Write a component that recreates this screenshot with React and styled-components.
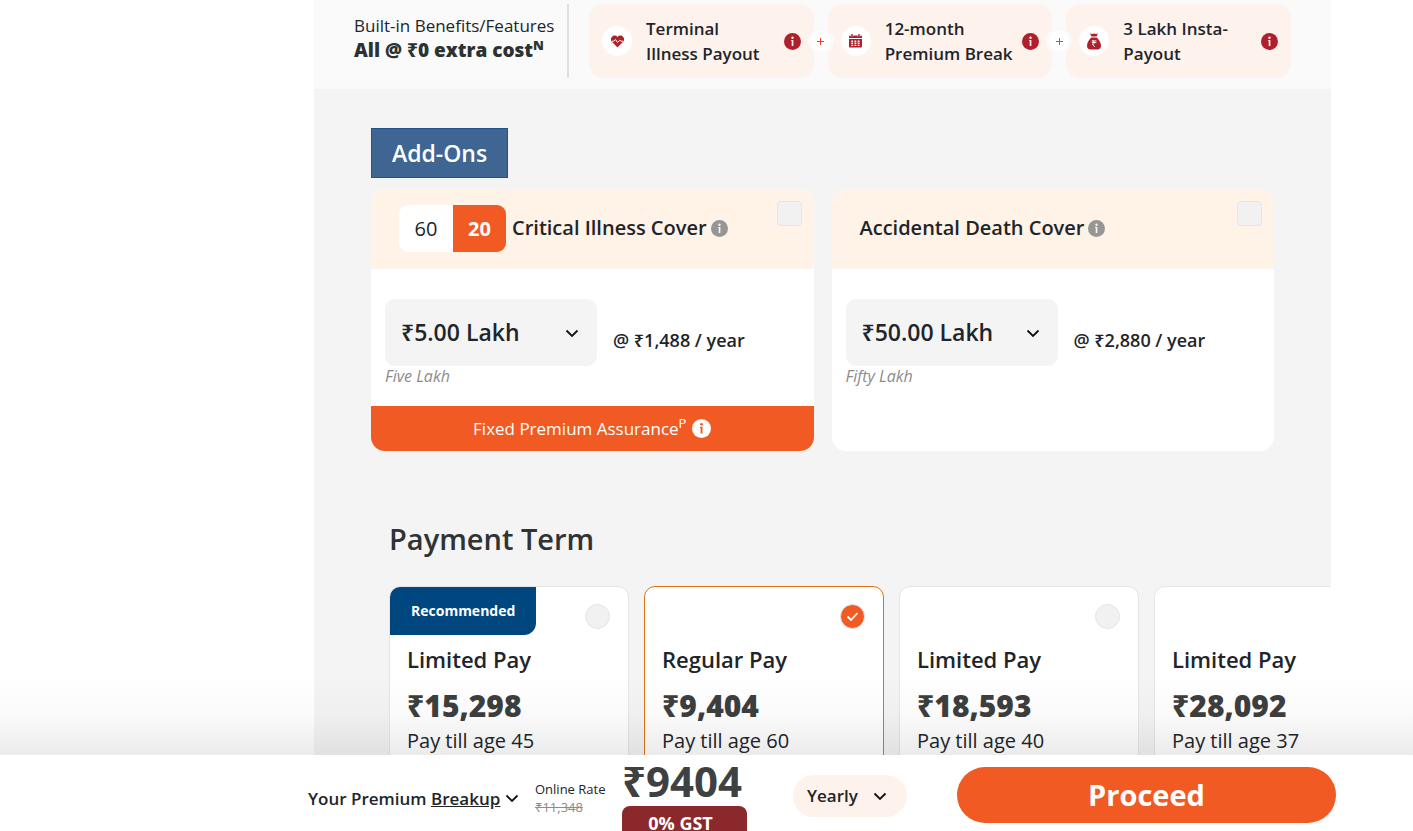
import React, { useState } from 'react';
import styled, { createGlobalStyle } from 'styled-components';

const GlobalStyle = createGlobalStyle`
  * {
    box-sizing: border-box;
  }

  body {
    margin: 0;
    background: #fff;
    color: #212529;
    font-family: 'Open Sans', 'Noto Sans', sans-serif;
    font-size: 17px;
  }

  button, select, input {
    font-family: inherit;
    color: inherit;
  }

  h2, h3, p {
    margin: 0;
  }
`;

const Page = styled.div`
  display: flex;
  flex-direction: column;
  height: 100vh;
`;

const Scroller = styled.div`
  flex: 1;
  min-height: 0;
  overflow-y: auto;
  scrollbar-width: none;
  padding: 0 82px 0 314px;
`;

const Content = styled.main`
  background: #f4f4f4;
  overflow: hidden;
`;

// Built-in benefits strip
const Benefits = styled.section`
  display: flex;
  background: #fafafa;
  padding: 4px 40px 11px;
`;

const BenefitsTitle = styled.div`
  width: 215px;
  flex-shrink: 0;
  padding-top: 10px;
  border-right: 2px solid #dfdfdf;
  line-height: 24px;
  white-space: nowrap;

  strong {
    display: block;
    font-size: 19px;
    font-weight: 800;
    color: #2b3230;
  }
`;

const Sup = styled.sup`
  font-size: 13px;
  line-height: 0;
`;

const BenefitList = styled.ul`
  display: flex;
  flex: 1;
  gap: 14px;
  list-style: none;
  margin: 0 0 0 20px;
  padding: 0;
`;

const Benefit = styled.li`
  position: relative;
  display: flex;
  flex: 1;
  align-items: center;
  height: 74px;
  padding: 0 13px;
  border-radius: 14px;
  background: #fef2ec;
`;

const BenefitIcon = styled.span`
  display: flex;
  align-items: center;
  justify-content: center;
  width: 30px;
  height: 30px;
  margin-right: 14px;
  border-radius: 50%;
  background: #fff;
`;

const BenefitName = styled.span`
  flex: 1;
  font-weight: 600;
  line-height: 25px;
  white-space: pre;
`;

const Plus = styled.span`
  position: absolute;
  z-index: 1;
  right: -20px;
  display: flex;
  align-items: center;
  justify-content: center;
  width: 26px;
  height: 26px;
  border: 3px solid #fafafa;
  border-radius: 50%;
  background: #fff;
`;

const InfoButton = styled.button`
  display: inline-flex;
  flex-shrink: 0;
  padding: 0;
  border: 0;
  background: none;
  color: ${(props) => props.$color};
  cursor: pointer;
`;

// Add-ons
const AddOns = styled.section`
  padding: 39px 57px 0;
`;

const AddOnsBadge = styled.h2`
  width: fit-content;
  padding: 0 20px;
  border: 1px solid #1d548b;
  background: #3f6592;
  color: #fff;
  font-size: 23px;
  font-weight: 600;
  line-height: 48px;
`;

const AddOnGrid = styled.div`
  display: grid;
  grid-template-columns: 1fr 1fr;
  gap: 18px;
  margin-top: 11px;
`;

const AddOnCard = styled.article`
  display: flex;
  flex-direction: column;
  border-radius: 14px;
  background: #fff;
  overflow: hidden;
`;

const AddOnHeader = styled.header`
  display: flex;
  align-items: center;
  height: 80px;
  padding: 0 12px 2px 28px;
  background: #fff2e6;
`;

const AddOnTitle = styled.h3`
  margin-right: 4px;
  font-size: 20px;
  font-weight: 600;
  line-height: 28px;
  white-space: nowrap;
`;

const AgeToggle = styled.div`
  display: flex;
  margin-right: 6px;
  border-radius: 9px;
  overflow: hidden;
`;

const AgeButton = styled.button`
  width: ${(props) => (props.$active ? 53 : 54)}px;
  height: 47px;
  padding: 0;
  border: 0;
  background: ${(props) => (props.$active ? '#f15a22' : '#fff')};
  color: ${(props) => (props.$active ? '#fff' : '#212529')};
  font-size: 20px;
  font-weight: ${(props) => (props.$active ? 700 : 400)};
  cursor: pointer;
`;

const CheckBox = styled.input`
  appearance: none;
  align-self: flex-start;
  width: 25px;
  height: 25px;
  margin: 12px 0 0 auto;
  border: 1px solid #e4e5ea;
  border-radius: 4px;
  background: #f1f1f2;

  &:checked {
    background: #f15a22;
  }
`;

const AddOnBody = styled.div`
  display: flex;
  gap: 16px;
  padding: 30px 14px 20px;
`;

const SelectBox = styled.div`
  position: relative;
  display: flex;
  align-items: center;
  width: ${(props) => props.$width}px;

  svg {
    position: absolute;
    right: ${(props) => props.$inset}px;
    pointer-events: none;
  }
`;

const AmountSelect = styled.select`
  appearance: none;
  width: 100%;
  height: 67px;
  padding: 0 16px 2px;
  border: 0;
  border-radius: 10px;
  background: #f4f4f4;
  font-size: 23px;
  font-weight: 600;
`;

const AmountWords = styled.p`
  color: #8c8c8c;
  font-size: 16px;
  font-style: italic;
  line-height: 20px;
`;

const AddOnPrice = styled.p`
  padding-top: 29px;
  font-size: 18px;
  font-weight: 600;
  line-height: 24px;
`;

const Assurance = styled.footer`
  display: flex;
  align-items: center;
  justify-content: center;
  gap: 6px;
  height: 45px;
  background: #f15a22;
  color: #fff;
`;

// Payment term
const PaymentTerm = styled.section`
  padding: 68px 0 40px 75px;
`;

const PaymentTitle = styled.h2`
  color: #2f3333;
  font-size: 29px;
  font-weight: 600;
  line-height: 40px;
`;

const PlanRow = styled.div`
  display: flex;
  gap: 15px;
  margin-top: 27px;
`;

const Plan = styled.label`
  position: relative;
  display: flex;
  flex-direction: column;
  flex: 0 0 240px;
  padding: 57px 17px 30px;
  border: 1px solid ${(props) => (props.$active ? '#e07318' : '#e4e5ea')};
  border-radius: 11px;
  background: #fff;
`;

const Recommended = styled.span`
  position: absolute;
  top: 0;
  left: 0;
  padding: 0 21px;
  border-radius: 10px 0 12px 0;
  background: #00467f;
  color: #fff;
  font-size: 14px;
  font-weight: 700;
  line-height: 48px;
`;

const PlanRadio = styled.input`
  appearance: none;
  position: absolute;
  top: 17px;
  right: 18px;
  width: 25px;
  height: 25px;
  margin: 0;
  border: 1px solid #e4e5ea;
  border-radius: 50%;
  background: #f1f1f2;

  &:checked {
    background: #f15a22;
  }
`;

const PlanTick = styled.svg`
  position: absolute;
  top: 23px;
  right: 24px;
  pointer-events: none;
`;

const PlanName = styled.span`
  font-size: 22px;
  font-weight: 600;
  line-height: 30px;
`;

const PlanPrice = styled.span`
  margin-top: 12px;
  color: #3d3f3f;
  font-size: 30px;
  font-weight: 800;
  line-height: 40px;
`;

const PlanTill = styled.span`
  margin-top: 2px;
  font-size: 20px;
  line-height: 26px;
`;

// Sticky premium bar
const BottomBar = styled.footer`
  position: relative;
  flex-shrink: 0;
  display: grid;
  grid-template-columns: 227px 87px 171px 164px 1fr;
  height: 76px;
  padding: 0 77px 0 308px;
  background: #fff;

  &::before {
    content: '';
    position: absolute;
    right: 0;
    bottom: 100%;
    left: 0;
    height: 80px;
    background: linear-gradient(rgba(0, 0, 0, 0), rgba(0, 0, 0, 0.02) 50%, rgba(0, 0, 0, 0.08));
    pointer-events: none;
  }
`;

const Premium = styled.div`
  display: flex;
  align-items: center;
  gap: 5px;
  height: 24px;
  margin-top: 31px;
  font-weight: 600;
  white-space: nowrap;

  a {
    color: inherit;
  }
`;

const OnlineRate = styled.div`
  padding-top: 25px;
  font-size: 13px;
  line-height: 18px;
  white-space: nowrap;

  s {
    display: block;
    color: #8c8c8c;
  }
`;

const Total = styled.div`
  width: 125px;
`;

const TotalPrice = styled.div`
  color: #3f4041;
  font-size: 42px;
  font-weight: 700;
  line-height: 51px;
`;

const Gst = styled.div`
  height: 25px;
  padding-right: 8px;
  border-radius: 8px 8px 0 0;
  background: #8a282b;
  color: #fff;
  font-size: 18px;
  font-weight: 700;
  line-height: 34px;
  text-align: center;
  overflow: hidden;
`;

const FrequencySelect = styled.select`
  appearance: none;
  width: 100%;
  height: 42px;
  padding: 0 14px 2px;
  border: 0;
  border-radius: 21px;
  background: #fef2ec;
  font-size: 17px;
  font-weight: 600;
`;

const FrequencyCell = styled.div`
  padding-top: 20px;
`;

const Proceed = styled.button`
  height: 56px;
  margin-top: 12px;
  padding-bottom: 3px;
  border: 0;
  border-radius: 28px;
  background: #f15a22;
  color: #fff;
  font-size: 29px;
  font-weight: 700;
  cursor: pointer;
`;

const Chevron = () => (
  <svg width="14" height="14" viewBox="0 0 14 14" fill="none" stroke="#111" strokeWidth="1.8">
    <path d="M1.5 4.5 7 10l5.5-5.5" />
  </svg>
);

const InfoIcon = ({ size = 17, mark = '#fff' }) => (
  <svg width={size} height={size} viewBox="0 0 17 17">
    <circle cx="8.5" cy="8.5" r="8.5" fill="currentColor" />
    <circle cx="8.5" cy="4.8" r="1.2" fill={mark} />
    <path fill={mark} d="M7.1 7h2.3v6H7.700V8h-.6z" />
  </svg>
);

const HeartIcon = () => (
  <svg width="13" height="13" viewBox="0 0 13 13">
    <path
      fill="#b0202b"
      d="M6.5 12.6 1.1 7.1A3.6 3.6 0 0 1 .9 2 3.4 3.4 0 0 1 6.5 2a3.4 3.4 0 0 1 5.6 0 3.6 3.6 0 0 1-.2 5.1z"
    />
    <path fill="none" stroke="#fff" d="M.5 6.2h2.3l1.6-1.7 2.2 3 2.2-2.3 1.2 1h2.5" />
  </svg>
);

const CalendarIcon = () => (
  <svg width="13" height="14" viewBox="0 0 13 14">
    <path fill="#b0202b" d="M1 1.5h11a1 1 0 0 1 1 1V4H0V2.5a1 1 0 0 1 1-1zM0 5h13v7.5a1 1 0 0 1-1 1H1a1 1 0 0 1-1-1z" />
    <path stroke="#fff" strokeWidth="2.6" d="M3 0v2.6M10 0v2.6" />
    <path stroke="#b0202b" strokeWidth="1.4" d="M3 0v3M10 0v3" />
    <path
      stroke="#fff"
      strokeWidth="1.4"
      strokeDasharray="1.8 1.4"
      d="M2.3 7.2h8.4M2.3 9.3h8.4M2.3 11.4h8.4"
    />
  </svg>
);

const MoneyBagIcon = () => (
  <svg width="14" height="17" viewBox="0 0 14 17">
    <path
      fill="#b0202b"
      d="M3 .5l2 .6L7 .5l2 .6 2-.6-1.4 3H4.4zM4.4 4.5h5.2c2 1.8 4.4 5 4.4 8.3 0 2.6-1.5 3.7-3.5 3.7h-7C1.5 16.5 0 15.4 0 12.8 0 9.5 2.4 6.3 4.4 4.5z"
    />
    <path
      fill="none"
      stroke="#fff"
      strokeWidth="0.9"
      d="M4.8 7.9h4.6M4.8 9.5h4.6M5.2 7.9c3.2 0 3.2 3.3 0 3.3l2.7 2.7"
    />
  </svg>
);

const benefits = [
  { name: 'Terminal\nIllness Payout', Icon: HeartIcon },
  { name: '12-month\nPremium Break', Icon: CalendarIcon },
  { name: '3 Lakh Insta-\nPayout', Icon: MoneyBagIcon },
];

const plans = [
  { name: 'Limited Pay', price: '₹15,298', till: 'Pay till age 45', recommended: true },
  { name: 'Regular Pay', price: '₹9,404', till: 'Pay till age 60' },
  { name: 'Limited Pay', price: '₹18,593', till: 'Pay till age 40' },
  { name: 'Limited Pay', price: '₹28,092', till: 'Pay till age 37' },
];

function AddOn({ title, amount, words, price, toggle, assurance }) {
  const [age, setAge] = useState(20);

  return (
    <AddOnCard>
      <AddOnHeader>
        {toggle && (
          <AgeToggle>
            {[60, 20].map((value) => (
              <AgeButton key={value} type="button" $active={age === value} onClick={() => setAge(value)}>
                {value}
              </AgeButton>
            ))}
          </AgeToggle>
        )}
        <AddOnTitle>{title}</AddOnTitle>
        <InfoButton type="button" $color="#969696" aria-label={`About ${title}`}>
          <InfoIcon mark="#fff2e6" />
        </InfoButton>
        <CheckBox type="checkbox" aria-label={`Add ${title}`} />
      </AddOnHeader>
      <AddOnBody>
        <div>
          <SelectBox $width={212} $inset={18}>
            <AmountSelect aria-label={`${title} amount`}>
              <option>{amount}</option>
            </AmountSelect>
            <Chevron />
          </SelectBox>
          <AmountWords>{words}</AmountWords>
        </div>
        <AddOnPrice>{price}</AddOnPrice>
      </AddOnBody>
      {assurance && (
        <Assurance>
          <span>
            Fixed Premium Assurance<Sup>P</Sup>
          </span>
          <InfoButton type="button" $color="#fff" aria-label="About Fixed Premium Assurance">
            <InfoIcon size={19} mark="#f15a22" />
          </InfoButton>
        </Assurance>
      )}
    </AddOnCard>
  );
}

function App() {
  const [selected, setSelected] = useState(1);

  return (
    <Page>
      <GlobalStyle />
      <Scroller>
        <Content>
          <Benefits>
            <BenefitsTitle>
              Built-in Benefits/Features
              <strong>
                All @ ₹0 extra cost<Sup>N</Sup>
              </strong>
            </BenefitsTitle>
            <BenefitList>
              {benefits.map(({ name, Icon }, index) => (
                <Benefit key={name}>
                  <BenefitIcon>
                    <Icon />
                  </BenefitIcon>
                  <BenefitName>{name}</BenefitName>
                  <InfoButton type="button" $color="#b0202b" aria-label={`About ${name}`}>
                    <InfoIcon mark="#fef2ec" />
                  </InfoButton>
                  {index < benefits.length - 1 && (
                    <Plus>
                      <svg width="7" height="7" viewBox="0 0 7 7" stroke="#f0431e">
                        <path d="M3.5 0v7M0 3.5h7" />
                      </svg>
                    </Plus>
                  )}
                </Benefit>
              ))}
            </BenefitList>
          </Benefits>

          <AddOns>
            <AddOnsBadge>Add-Ons</AddOnsBadge>
            <AddOnGrid>
              <AddOn
                title="Critical Illness Cover"
                amount="₹5.00 Lakh"
                words="Five Lakh"
                price="@ ₹1,488 / year"
                toggle
                assurance
              />
              <AddOn
                title="Accidental Death Cover"
                amount="₹50.00 Lakh"
                words="Fifty Lakh"
                price="@ ₹2,880 / year"
              />
            </AddOnGrid>
          </AddOns>

          <PaymentTerm>
            <PaymentTitle>Payment Term</PaymentTitle>
            <PlanRow>
              {plans.map((plan, index) => (
                <Plan key={plan.price} $active={selected === index}>
                  {plan.recommended && <Recommended>Recommended</Recommended>}
                  <PlanRadio
                    type="radio"
                    name="plan"
                    checked={selected === index}
                    onChange={() => setSelected(index)}
                  />
                  {selected === index && (
                    <PlanTick width="13" height="13" viewBox="0 0 13 13" fill="none" stroke="#fff" strokeWidth="1.8">
                      <path d="M1.5 6.5 5 10l6.5-7" />
                    </PlanTick>
                  )}
                  <PlanName>{plan.name}</PlanName>
                  <PlanPrice>{plan.price}</PlanPrice>
                  <PlanTill>{plan.till}</PlanTill>
                </Plan>
              ))}
            </PlanRow>
          </PaymentTerm>
        </Content>
      </Scroller>

      <BottomBar>
        <Premium>
          <span>
            Your Premium <a href="#breakup">Breakup</a>
          </span>
          <Chevron />
        </Premium>
        <OnlineRate>
          Online Rate
          <s>₹11,348</s>
        </OnlineRate>
        <Total>
          <TotalPrice>₹9404</TotalPrice>
          <Gst>0% GST</Gst>
        </Total>
        <FrequencyCell>
          <SelectBox $width={114} $inset={20}>
            <FrequencySelect aria-label="Payment frequency">
              <option>Yearly</option>
            </FrequencySelect>
            <Chevron />
          </SelectBox>
        </FrequencyCell>
        <Proceed type="button">Proceed</Proceed>
      </BottomBar>
    </Page>
  );
}

export default App;
